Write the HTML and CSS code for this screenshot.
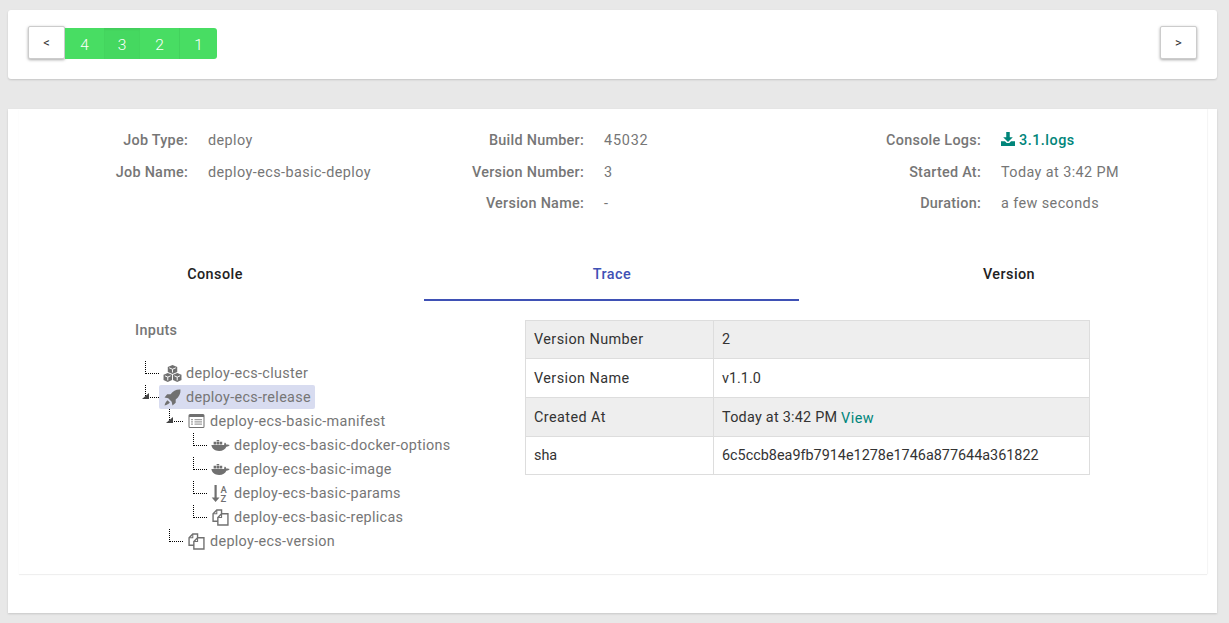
FILE: index.html
```html
<!DOCTYPE html>
<html>
<head>
    <meta charset="UTF-8">
    <title>Job Details</title>
    <link rel="stylesheet" href="styles.css">
</head>
<body>
    <div class="card pager-card">
        <button class="nav-btn">&lt;</button>
        <div class="steps">
            <span class="step">4</span>
            <span class="step active">3</span>
            <span class="step">2</span>
            <span class="step">1</span>
        </div>
        <button class="nav-btn next">&gt;</button>
    </div>

    <div class="card detail-card">
        <div class="panel">
            <div class="info">
                <div class="info-col col-a">
                    <span class="label">Job Type:</span><span class="value">deploy</span>
                    <span class="label">Job Name:</span><span class="value">deploy-ecs-basic-deploy</span>
                </div>
                <div class="info-col col-b">
                    <span class="label">Build Number:</span><span class="value digits">45032</span>
                    <span class="label">Version Number:</span><span class="value">3</span>
                    <span class="label">Version Name:</span><span class="value">-</span>
                </div>
                <div class="info-col col-c">
                    <span class="label">Console Logs:</span>
                    <a class="logs" href="#"><svg class="dl-icon" viewBox="0 0 16 16"><path d="M6 0h4v6h3.500L8 11.500 2.500 6H6z"/><path d="M0 10.500h4.500l2 2h3l2-2H16V16H0z"/></svg>3.1.logs</a>
                    <span class="label">Started At:</span><span class="value">Today at 3:42 PM</span>
                    <span class="label">Duration:</span><span class="value">a few seconds</span>
                </div>
            </div>

            <div class="tabs">
                <div class="tab">Console</div>
                <div class="tab active">Trace</div>
                <div class="tab">Version</div>
            </div>

            <div class="trace">
                <div class="inputs">
                    <div class="inputs-title">Inputs</div>
                    <ul class="tree">
                        <li class="node">
                            <div class="row">
                                <svg class="ico" viewBox="0 0 20 18"><path d="M10 0l5 2v5.500L10 9.500 5 7.500V2z"/><path d="M5 8.500l4.500 1.800v5.500L5 18 .5 15.800v-5.500z"/><path d="M15 8.500l4.500 1.800v5.500L15 18l-4.500-2.200v-5.500z"/><path class="cut" d="M6.500 3l3.500 1.500L13.500 3M10 4.500v3.500M2 11.500l3 1.300 3-1.300M5 12.800v3.500M12 11.500l3 1.300 3-1.300M15 12.800v3.500"/></svg>
                                <span>deploy-ecs-cluster</span>
                            </div>
                        </li>
                        <li class="node open">
                            <div class="row selected">
                                <svg class="ico" viewBox="0 0 16 16"><path d="M15.500.5c.3 4-1.300 7-4.500 9.300V13l-3 2.500-.8-3.500L4 8.800.5 8 3 5h3.200C8.500 1.800 11.500.2 15.500.5z"/><path d="M3.300 10.500l2.200 2.200c-1 1.300-2.700 2.200-5 2.800.5-2.300 1.500-4 2.800-5z"/></svg>
                                <span>deploy-ecs-release</span>
                            </div>
                            <ul>
                                <li class="node open">
                                    <div class="row">
                                        <svg class="ico list" viewBox="0 0 16 14"><path fill-rule="evenodd" d="M1.500 0h13A1.500 1.500 0 0 1 16 1.500v11a1.500 1.500 0 0 1-1.500 1.500h-13A1.500 1.500 0 0 1 0 12.500v-11A1.500 1.500 0 0 1 1.500 0zM1 3v9.500a.5.500 0 0 0 .5.500h13a.5.500 0 0 0 .5-.500V3z"/><path class="soft" d="M2.500 5h2v1.200h-2zm3.500 0h7.500v1.200H6zM2.500 7.300h2v1.200h-2zm3.500 0h7.500v1.200H6zM2.500 9.600h2v1.200h-2zm3.500 0h7.500v1.200H6z"/></svg>
                                        <span>deploy-ecs-basic-manifest</span>
                                    </div>
                                    <ul>
                                        <li class="node">
                                            <div class="row">
                                                <svg class="ico whale" viewBox="0 0 20 12"><path d="M0 5.500h14c-.2-1 .1-2 .9-2.700.9.600 1.400 1.400 1.500 2.300 1.100-.3 2.500-.2 3.600.4-.7 1.200-2 1.800-3.600 1.800C15.300 10 12.500 12 8.500 12 3.500 12 .8 9.500 0 5.500z"/><path d="M2.500 1.800h2.800v3H2.500zm3.300 0h2.800v3H5.800zm0-1.800h2.800v1.400H5.800zm3.300 1.800h2.800v3H9.100z"/></svg>
                                                <span>deploy-ecs-basic-docker-options</span>
                                            </div>
                                        </li>
                                        <li class="node">
                                            <div class="row">
                                                <svg class="ico whale" viewBox="0 0 20 12"><path d="M0 5.500h14c-.2-1 .1-2 .9-2.700.9.600 1.400 1.400 1.500 2.300 1.100-.3 2.500-.2 3.600.4-.7 1.200-2 1.800-3.600 1.800C15.300 10 12.500 12 8.500 12 3.500 12 .8 9.500 0 5.500z"/><path d="M2.500 1.800h2.800v3H2.500zm3.300 0h2.800v3H5.800zm0-1.800h2.800v1.400H5.800zm3.300 1.800h2.800v3H9.100z"/></svg>
                                                <span>deploy-ecs-basic-image</span>
                                            </div>
                                        </li>
                                        <li class="node">
                                            <div class="row">
                                                <svg class="ico" viewBox="0 0 19 17"><path d="M3.500 0h2.200v12.500h2.800L4.600 17 .7 12.500h2.800z"/><text x="9.500" y="7.500" class="az">A</text><text x="9.500" y="16.500" class="az">Z</text></svg>
                                                <span>deploy-ecs-basic-params</span>
                                            </div>
                                        </li>
                                        <li class="node">
                                            <div class="row">
                                                <svg class="ico" viewBox="0 0 16 16"><path class="line" d="M5 11.500H1V4.500L4.500 1H9v3M5.500 15V8L9 4.500h6V15z"/><path class="line thin" d="M4.500 1v3.500H1M9 4.500V8H5.500"/></svg>
                                                <span>deploy-ecs-basic-replicas</span>
                                            </div>
                                        </li>
                                    </ul>
                                </li>
                                <li class="node">
                                    <div class="row">
                                        <svg class="ico" viewBox="0 0 16 16"><path class="line" d="M5 11.500H1V4.500L4.500 1H9v3M5.500 15V8L9 4.500h6V15z"/><path class="line thin" d="M4.500 1v3.500H1M9 4.500V8H5.500"/></svg>
                                        <span>deploy-ecs-version</span>
                                    </div>
                                </li>
                            </ul>
                        </li>
                    </ul>
                </div>

                <table class="version-table">
                    <tr><td class="key">Version Number</td><td>2</td></tr>
                    <tr><td class="key">Version Name</td><td>v1.1.0</td></tr>
                    <tr><td class="key">Created At</td><td><span class="date">Today at 3:42 PM</span> <a class="view" href="#">View</a></td></tr>
                    <tr><td class="key short">sha</td><td>6c5ccb8ea9fb7914e1278e1746a877644a361822</td></tr>
                </table>
            </div>
        </div>
    </div>
</body>
</html>
```

FILE: styles.css
```css
html, body {
    height: 100%;
}

body {
    margin: 0;
    padding: 10px 12px 10px 8px;
    box-sizing: border-box;
    background: #e8e8e8;
    font-family: Roboto, "Liberation Sans", sans-serif;
    font-size: 14.4px;
    color: #333;
}

.card {
    background: #fff;
    box-shadow: 0 1px 2px rgba(0,0,0,0.15);
}

.pager-card {
    display: flex;
    align-items: center;
    height: 69px;
    padding: 0 20px;
    box-sizing: border-box;
    border-radius: 3px;
    margin-bottom: 30px;
}

.nav-btn {
    width: 37px;
    height: 33px;
    padding: 0;
    background: #fff;
    border: 1px solid #ccc;
    border-radius: 2px;
    box-shadow: 0 1px 3px rgba(0,0,0,0.35);
    font-family: Roboto, sans-serif;
    font-size: 13px;
    color: #333;
    margin-bottom: 4px;
}

.next {
    margin-left: auto;
}

.steps {
    display: flex;
    height: 31px;
    margin-bottom: 2px;
    background: #48dd63;
    border-radius: 0 3px 3px 0;
}

.step {
    width: 39px;
    display: flex;
    align-items: center;
    justify-content: center;
    padding-top: 2px;
    box-sizing: border-box;
    color: #fff;
    font-size: 15.5px;
    font-weight: 300;
}

.step:last-child {
    width: 38px;
    border-left: 1px solid #43d25d;
}

.step.active {
    width: 36px;
    background: #45d860;
    box-shadow: inset 0 2px 2px rgba(0,0,0,0.05);
}

.detail-card {
    height: 504px;
    padding: 0 10px 39px 11px;
    box-sizing: border-box;
}

.panel {
    height: 100%;
    box-shadow: 0 1px 1px rgba(0,0,0,0.06), 1px 0 1px rgba(0,0,0,0.03);
}

.info {
    display: flex;
    padding-top: 16px;
    height: 141px;
    box-sizing: border-box;
    color: #767676;
}

.info-col {
    display: grid;
    grid-auto-rows: 31.5px;
    column-gap: 20px;
    align-items: center;
    align-content: start;
}

.col-a { grid-template-columns: 169px auto; width: 396px; }
.col-b { grid-template-columns: 169px auto; width: 397px; }
.col-c { grid-template-columns: 169px auto; }

.label {
    text-align: right;
    font-weight: 500;
    letter-spacing: 0.27px;
}

.value {
    letter-spacing: 0.42px;
}

.value.digits {
    letter-spacing: 0.8px;
}

.logs {
    color: #00857a;
    font-weight: 500;
    letter-spacing: 0.5px;
    text-decoration: none;
}

.dl-icon {
    width: 14px;
    height: 14px;
    margin-right: 4px;
    fill: #00857a;
    vertical-align: -1px;
}

.tabs {
    display: grid;
    grid-template-columns: repeat(3, 397px);
    margin-left: -3px;
}

.tab {
    height: 51px;
    line-height: 49px;
    margin: 0 11px;
    padding-left: 1px;
    text-align: center;
    font-weight: 500;
    letter-spacing: 0.45px;
    color: #222;
    box-sizing: border-box;
}

.tab.active {
    color: #3f51b5;
    border-bottom: 2px solid #3f51b5;
}

.trace {
    display: flex;
    padding-top: 19px;
}

.inputs {
    width: 506px;
    padding-left: 116px;
    box-sizing: border-box;
    color: #767676;
}

.inputs-title {
    font-weight: 500;
    letter-spacing: 0.33px;
    height: 40px;
    margin-top: 2px;
    margin-bottom: -1px;
}

.tree, .tree ul {
    list-style: none;
    margin: 0;
    padding: 0;
}

.tree {
    padding-left: 24px;
}

.tree ul {
    padding-left: 24px;
}

.node {
    position: relative;
}

/* dotted connector from the parent down to the row */
.node::before {
    content: "";
    position: absolute;
    left: -14px;
    top: 0;
    width: 13px;
    height: 12px;
    border-left: 1px dotted #000;
    border-bottom: 1px dotted #000;
}

/* open nodes get a little toggle on top of the connector */
.node.open::after {
    content: "";
    position: absolute;
    left: -17px;
    top: 8px;
    width: 0;
    height: 0;
    border-style: solid;
    border-width: 0 0 6px 7px;
    border-color: transparent transparent #444 transparent;
}

.row {
    display: flex;
    width: fit-content;
    align-items: center;
    height: 24px;
    padding: 0 4px;
    border-radius: 2px;
    white-space: nowrap;
    letter-spacing: 0.32px;
}

.row.selected {
    background: #d8dcf0;
}

.ico {
    width: 19px;
    height: 17px;
    margin-right: 4px;
    fill: #707070;
}

.ico.whale {
    height: 11px;
}

.ico.list {
    height: 14px;
}

.ico .soft {
    fill: #a0a0a0;
}

.ico .cut {
    fill: none;
    stroke: #fff;
    stroke-width: 1;
}

.ico .line {
    fill: none;
    stroke: #707070;
    stroke-width: 1.3;
}

.ico .thin {
    stroke-width: 1;
}

.ico .az {
    font-family: Roboto, sans-serif;
    font-size: 9.5px;
    font-weight: 500;
    letter-spacing: 0;
}

.version-table {
    width: 565px;
    border-collapse: collapse;
    align-self: flex-start;
}

.version-table tr {
    height: 39px;
}

.version-table tr:first-child,
.version-table tr:last-child {
    height: 38px;
}

.version-table td {
    border: 1px solid #ddd;
    padding: 0 8px;
}

.version-table .key {
    width: 171px;
    letter-spacing: 0.43px;
}

.version-table .short {
    letter-spacing: 0;
}

.version-table tr:nth-child(odd) {
    background: #eee;
}

.date {
    letter-spacing: 0.25px;
}

.view {
    position: relative;
    top: 1px;
    color: #00857a;
    letter-spacing: 0.5px;
    text-decoration: none;
}
```
